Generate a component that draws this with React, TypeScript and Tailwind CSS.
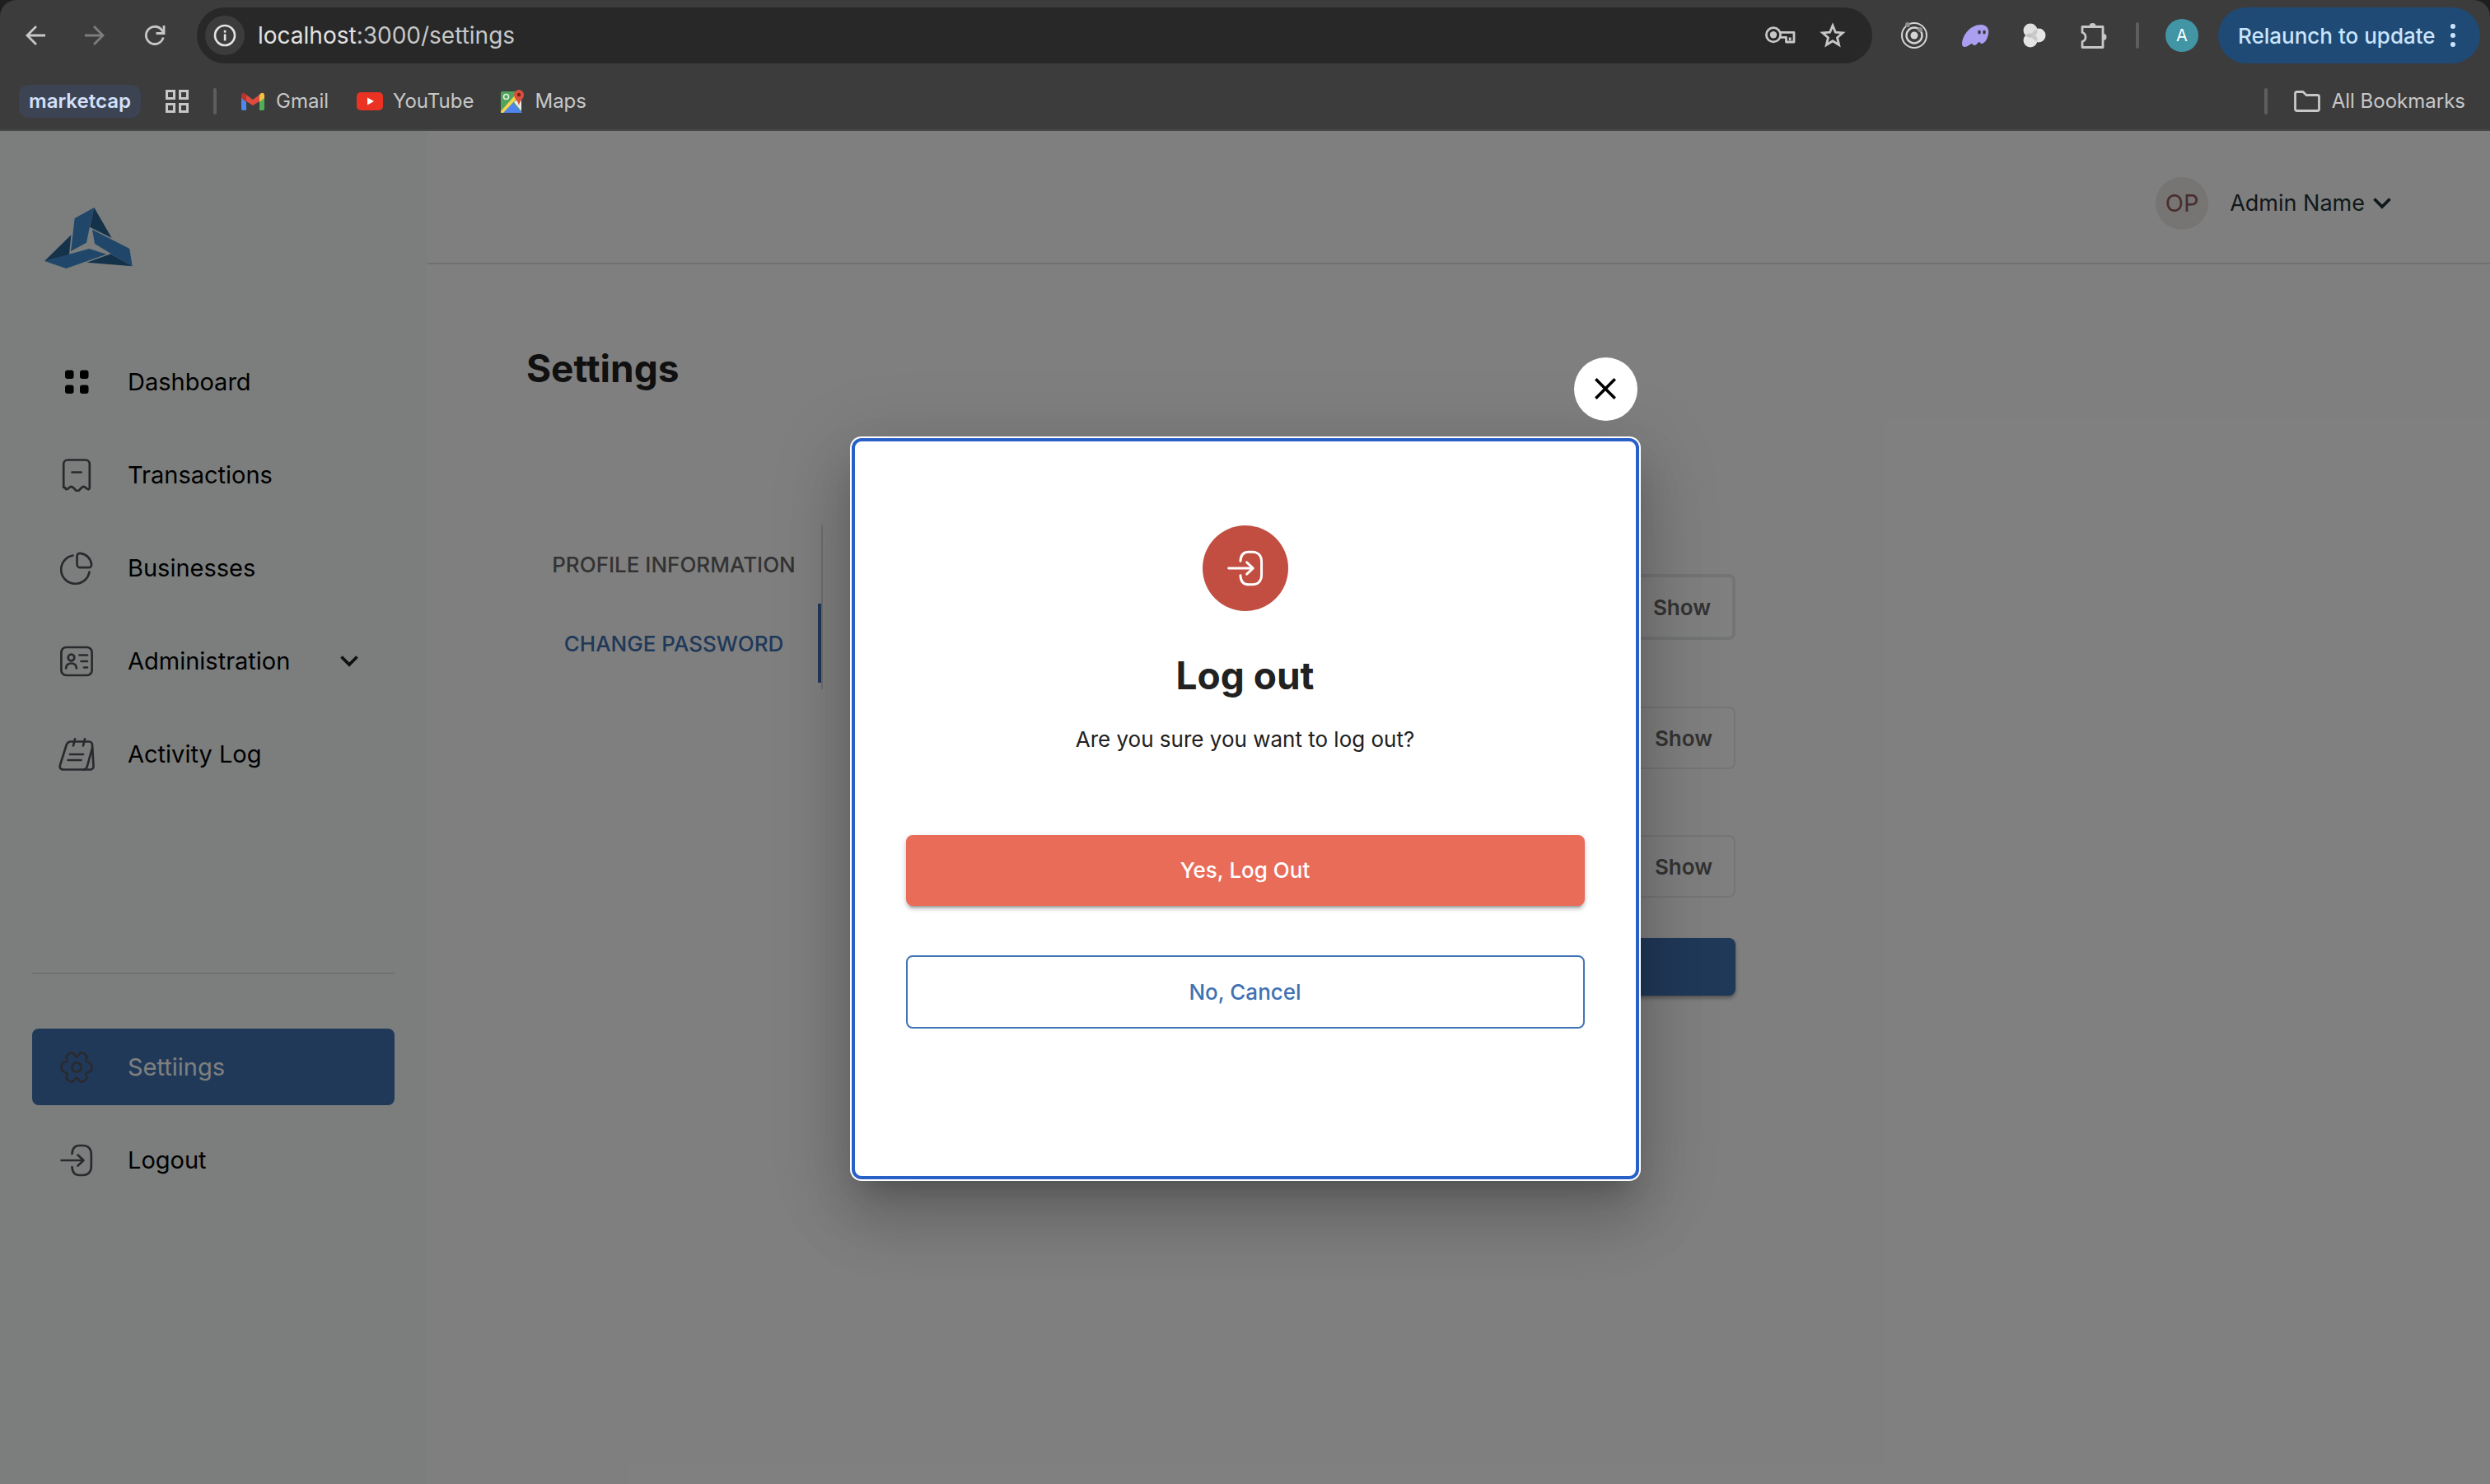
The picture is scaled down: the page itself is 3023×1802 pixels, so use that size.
import React from "react";

const stroke = {
  fill: "none",
  stroke: "currentColor",
  strokeLinecap: "round" as const,
  strokeLinejoin: "round" as const,
};

function BackIcon({ flip = false }: { flip?: boolean }) {
  return (
    <svg viewBox="0 0 24 24" className={flip ? "size-6 rotate-180" : "size-6"} {...stroke} strokeLinecap="butt" strokeLinejoin="miter" strokeWidth="2.8">
      <path d="M24 12H2M13 1 2 12l11 11" />
    </svg>
  );
}

function ReloadIcon() {
  return (
    <svg viewBox="0 0 26 26" className="size-[26px]" {...stroke} strokeLinecap="butt" strokeLinejoin="miter" strokeWidth="2.8">
      <path d="M23.2 15.5A10.6 10.6 0 1 1 21 6l2.5 3" />
      <path d="M24 1v9.5h-9.5" />
    </svg>
  );
}

function InfoIcon() {
  return (
    <svg viewBox="0 0 28 28" className="size-7">
      <circle cx="14" cy="14" r="12" fill="none" stroke="#e3e3e3" strokeWidth="2.6" />
      <rect x="12.8" y="12.4" width="2.6" height="8" fill="#e3e3e3" />
      <rect x="12.8" y="7.8" width="2.6" height="2.8" fill="#e3e3e3" />
    </svg>
  );
}

function KeyIcon() {
  return (
    <svg viewBox="0 0 38 24" className="h-6 w-[38px]" fill="none" stroke="#c7c7c7" strokeWidth="2.8" strokeLinejoin="round">
      <path d="M17.8 8.4H35V20H25.5v-5.700h-7.6" />
      <path d="M30.2 14.5V18" />
      <circle cx="10" cy="11.3" r="8.6" />
      <circle cx="10" cy="11.3" r="4.2" fill="#c7c7c7" stroke="none" />
    </svg>
  );
}

function StarIcon() {
  return (
    <svg viewBox="0 0 32 32" className="size-8">
      <path d="m16 4 3.4 8.2 8.8.7-6.700 5.800 2.100 8.700L16 22.700l-7.600 4.700 2.100-8.700-6.700-5.800 8.800-.7Z" fill="none" stroke="#c7c7c7" strokeWidth="2.8" />
    </svg>
  );
}

function TargetIcon() {
  return (
    <svg viewBox="0 0 34 34" className="size-[34px]" fill="none" stroke="#d5d5d5">
      <circle cx="17" cy="17" r="15" strokeWidth="2" />
      <circle cx="17" cy="17" r="9.5" strokeWidth="2.4" />
      <circle cx="17" cy="17" r="4.5" fill="#d5d5d5" stroke="none" />
      <circle cx="9" cy="4" r="3" fill="#8d8d8d" stroke="none" />
      <circle cx="24" cy="10" r="3" fill="#8d8d8d" stroke="none" />
    </svg>
  );
}

function GhostIcon() {
  return (
    <svg viewBox="0 0 34 28" className="h-7 w-[34px]">
      <path d="M1 24C2 12 12 1 24 1c7 0 10 5 9 11-1 7-5 12-8 12-2 0-2-2-3-2-2 0-3 4-6 4-2 0-2-2-3-2-2 0-5 4-9 4-2 0-3-2-3-4Z" fill="#ab9ff2" />
      <ellipse cx="22" cy="10" rx="1.8" ry="2.6" fill="#3c3c3c" />
      <ellipse cx="28" cy="10" rx="1.8" ry="2.6" fill="#3c3c3c" />
    </svg>
  );
}

function PetalIcon() {
  return (
    <svg viewBox="0 0 30 30" className="size-[30px]">
      <circle cx="20" cy="15" r="8.5" fill="#e6e6e6" />
      <circle cx="10" cy="9" r="8.5" fill="#e0e0e0" />
      <circle cx="10" cy="21" r="8.5" fill="#e4e4e4" />
      <path d="M4 15c3.500-3.500 8.500-3.500 12 0-3.500 3.500-8.500 3.500-12 0Z" fill="#c2c2c2" />
      <path d="M11.500 15c.2-3.500 3-6.500 6.800-7.400.8 3-.2 6-2.800 7.900Z" fill="#c9c9c9" />
      <path d="M11.500 15c.2 3.500 3 6.500 6.800 7.400.8-3-.2-6-2.800-7.900Z" fill="#c9c9c9" />
    </svg>
  );
}

function PuzzleIcon() {
  return (
    <svg viewBox="0 0 34 34" className="size-[34px]">
      <path d="M3 6.500h25v25H3v-7c2.500-.8 4-2.800 4-5.500s-1.500-4.700-4-5.500Z" fill="none" stroke="#c7c7c7" strokeWidth="2.8" strokeLinejoin="round" />
      <path d="M11.500 6a4 4 0 0 1 8 0ZM28.500 15a4 4 0 0 1 0 8Z" fill="#c7c7c7" />
    </svg>
  );
}

function AppsIcon() {
  return (
    <svg viewBox="0 0 28 28" className="size-7" fill="none" stroke="#c7c7c7" strokeWidth="3">
      <rect x="1.5" y="1.5" width="9" height="9" />
      <rect x="17.5" y="1.5" width="9" height="9" />
      <rect x="1.5" y="17.5" width="9" height="9" />
      <rect x="17.5" y="17.5" width="9" height="9" />
    </svg>
  );
}

function GmailIcon() {
  return (
    <svg viewBox="0 0 28 22" className="h-[22px] w-7">
      <path d="M0 5v15a2 2 0 0 0 2 2h4V9Z" fill="#4f87f0" />
      <path d="M28 5v15a2 2 0 0 1-2 2h-4V9Z" fill="#4fae57" />
      <path d="M6 3v8l8 5 8-5V3l-8 6Z" fill="#dd4b3e" />
      <path d="M0 4v3l6 5V3L4.500 1.500C2.500 0 0 1 0 4Z" fill="#b8352c" />
      <path d="M28 4v3l-6 5V3l1.500-1.500C25.500 0 28 1 28 4Z" fill="#f5c142" />
    </svg>
  );
}

function YouTubeIcon() {
  return (
    <svg viewBox="0 0 32 22" className="h-[22px] w-8">
      <rect width="32" height="22" rx="5" fill="#ea3323" />
      <path d="m13 6.500 8 4.500-8 4.500Z" fill="#fff" />
    </svg>
  );
}

function MapsIcon() {
  return (
    <svg viewBox="0 0 30 30" className="size-[30px]">
      <rect x="1" y="3" width="25" height="26" rx="2" fill="#4fa35b" />
      <path d="M3 29 15 16l12 13Z" fill="#4f84ec" />
      <path d="M1 27 18 8l3 3L4 29H1Z" fill="#f6d54a" />
      <path d="m17 16 9-8v19Z" fill="#e9e9e9" />
      <circle cx="7.5" cy="9.5" r="3" fill="none" stroke="#e4efe4" strokeWidth="1.6" />
      <path d="M23 1a6 6 0 0 1 6 6c0 5-4.500 6-6 13-1.500-7-6-8-6-13a6 6 0 0 1 6-6Z" fill="#d9503f" />
      <circle cx="23" cy="7" r="2.2" fill="#7a1f17" />
    </svg>
  );
}

function FolderIcon() {
  return (
    <svg viewBox="0 0 32 26" className="h-[26px] w-8" fill="none" stroke="#c7c7c7" strokeWidth="2.8" strokeLinejoin="round">
      <path d="M1.500 3.500a2 2 0 0 1 2-2H11l4 4h13.500a2 2 0 0 1 2 2v15a2 2 0 0 1-2 2h-25a2 2 0 0 1-2-2Z" />
    </svg>
  );
}

function Logo() {
  return (
    <svg viewBox="162 126 321 222" className="h-[74px] w-[107px]">
      <g fill="#408fd5">
        <path d="M343 126 272 165 258 285 315 254 327 195Z" />
        <path d="M162 321 325 276 388 296 241 348Z" />
        <path d="M336 206 472 276 482 340 404 294 345 258Z" />
      </g>
      <g fill="#2a6496">
        <path d="M343 126 407 237 327 197Z" />
        <path d="M259 226 162 321 252 297Z" />
        <path d="M404 295 482 340 316 326Z" />
      </g>
    </svg>
  );
}

function DashboardIcon() {
  return (
    <svg viewBox="0 0 40 40" className="size-10" fill="#000">
      <rect x="6" y="5.5" width="10.5" height="10.5" rx="3" />
      <rect x="24" y="5.5" width="10.5" height="10.5" rx="3" />
      <rect x="6" y="23.5" width="10.5" height="10.5" rx="3" />
      <rect x="24" y="23.5" width="10.5" height="10.5" rx="3" />
    </svg>
  );
}

function ReceiptIcon() {
  return (
    <svg viewBox="0 0 40 40" className="size-10" {...stroke} strokeWidth="2.7">
      <path d="M4.200 35V6.500A5 5 0 0 1 9.200 1.500h21.600a5 5 0 0 1 5 5V35c0 2-1.500 2.600-3 1.600l-2-1.600c-1.500-1.200-3.500-1.200-4.800.2l-3 3c-1.300 1.300-2.700 1.300-4 0l-3-3c-1.300-1.400-3.300-1.400-4.800-.2l-2 1.600c-1.500 1-3 .4-3-1.600Z" />
      <path d="M14.500 16.500h11" />
    </svg>
  );
}

function PieIcon() {
  return (
    <svg viewBox="0 0 40 40" className="size-10" {...stroke} strokeWidth="2.7">
      <path d="M15.500 4.500A17.300 17.300 0 1 0 35.500 24.500" />
      <path d="M20.500 5.500c0-2.500 1.500-3.800 4-3.600C31.500 2.500 37 8 38 15c.3 2.800-1 4.200-3.500 4.200H24.500a4 4 0 0 1-4-4Z" />
    </svg>
  );
}

function IdCardIcon() {
  return (
    <svg viewBox="0 0 40 40" className="size-10" {...stroke} strokeWidth="2.7">
      <rect x="1.4" y="3" width="37.2" height="34" rx="6" />
      <circle cx="13.5" cy="15.5" r="3.8" />
      <path d="M7 28.500c.4-4 3-6 6.500-6s6.100 2 6.500 6M23.500 12.500H33M25.500 20H33M29 27.500h4" />
    </svg>
  );
}

function NotepadIcon() {
  return (
    <svg viewBox="0 0 44 40" className="h-10 w-11" {...stroke} strokeWidth="2.7">
      <path d="M15 4.500h22a4 4 0 0 1 4 4l1.500 26a4 4 0 0 1-4 4H6c-3.500 0-5-2.500-4-5.500L9.500 9c1-3 2.500-4.500 5.500-4.500Z" />
      <path d="M41 12 35 34c-.8 3-2 4.500-5 4.500M20 1.400l-2 8.100M32 1.400l-2 8.100M14 20h16M11.500 27h16" />
    </svg>
  );
}

function GearIcon() {
  return (
    <svg viewBox="0 -1 40 40" className="size-10" {...stroke} strokeWidth="2.7">
      <circle cx="20" cy="19" r="5.6" />
      <path d="M20 6.500C18 6.500 17.500 1.400 14.500 1.400C12 1.400 7.500 3.500 7.500 6.500C7.500 8.500 9.500 9.500 8.500 11.500C7.500 13.500 1.400 12 1.400 19C1.400 26 7.500 24.500 8.500 26.500C9.500 28.500 7.500 29.500 7.500 31.500C7.500 34.500 12 36.600 14.500 36.600C17.500 36.600 18 31.500 20 31.500C22 31.500 22.500 36.600 25.500 36.600C28 36.600 32.500 34.500 32.500 31.500C32.500 29.500 30.500 28.500 31.500 26.500C32.500 24.500 38.600 26 38.600 19C38.600 12 32.500 13.500 31.500 11.500C30.500 9.500 32.500 8.500 32.500 6.500C32.500 3.500 28 1.400 25.500 1.400C22.500 1.400 22 6.500 20 6.500Z" />
    </svg>
  );
}

function LogoutIcon({ className }: { className: string }) {
  return (
    <svg viewBox="0 0 40 40" className={className} {...stroke} strokeWidth="2.7">
      <path d="M14.500 12c.4-7 3.500-10 9-10h4C34 2 37.800 6 37.800 13v14c0 7-3.800 11-10.300 11h-4c-5.500 0-8.600-3-9-10" />
      <path d="M1.500 20H28M21.500 13.500 28.500 20l-7 6.500" />
    </svg>
  );
}

function ChevronIcon() {
  return (
    <svg viewBox="0 0 22 14" className="h-3.5 w-[22px]" {...stroke} strokeLinecap="butt" strokeLinejoin="miter" strokeWidth="3.8">
      <path d="m1.500 1.500 9.500 9.500 9.500-9.500" />
    </svg>
  );
}

function NavItem({ icon, label, active = false, children }: { icon: React.ReactNode; label: string; active?: boolean; children?: React.ReactNode }) {
  return (
    <a
      href="#"
      className={
        active
          ? "flex h-[93px] items-center gap-10 rounded-lg bg-[#4072b2] pl-8 text-[29px] text-white"
          : "flex h-[93px] items-center gap-10 rounded-lg pl-8 text-[29px] text-black"
      }
    >
      <span className="flex w-11 justify-center text-[#53545c]">{icon}</span>
      <span>{label}</span>
      {children}
    </a>
  );
}

function PasswordField({ label, focused = false }: { label: string; focused?: boolean }) {
  return (
    <div
      className={
        focused
          ? "flex h-20 items-center rounded-lg border-4 border-[#e6e9ec] pr-[26px]"
          : "flex h-[76px] items-center rounded-lg border-2 border-[#ebebeb] pr-[26px]"
      }
    >
      <input type="password" aria-label={label} className="h-full min-w-0 flex-1 px-6 text-[26px] outline-none" />
      <button type="button" className="text-[26px] font-semibold text-[#666]">Show</button>
    </div>
  );
}

function BrowserChrome() {
  return (
    <header className="bg-[#1f1f1f] text-[#c7c7c7]">
      <div className="rounded-t-[20px] border-b-2 border-[#474747] bg-[#3c3c3c]">
        <div className="flex h-[86px] items-center pr-3 pl-[31px]">
          <div className="flex w-[208px] items-center gap-12">
            <button type="button" aria-label="Back"><BackIcon /></button>
            <button type="button" aria-label="Forward" className="text-[#7d7d7d]"><BackIcon flip /></button>
            <button type="button" aria-label="Reload"><ReloadIcon /></button>
          </div>
          <div className="flex h-[68px] flex-1 items-center rounded-full bg-[#282828] pr-8 pl-2.5">
            <button type="button" aria-label="View site information" className="flex size-12 items-center justify-center rounded-full bg-[#3c3c3c]">
              <InfoIcon />
            </button>
            <div className="ml-4 flex-1 text-[28px] whitespace-nowrap">
              <span className="text-[#e3e3e3]">localhost</span>:3000/settings
            </div>
            <button type="button" aria-label="Passwords" className="mr-7"><KeyIcon /></button>
            <button type="button" aria-label="Bookmark this page"><StarIcon /></button>
          </div>
          <div className="ml-[34px] flex items-center gap-10">
            <TargetIcon />
            <GhostIcon />
            <PetalIcon />
            <PuzzleIcon />
          </div>
          <span className="ml-[34px] h-8 w-1 rounded-full bg-[#5e5e5e]" />
          <button type="button" aria-label="Profile" className="ml-8 size-10 rounded-full bg-[#4295a5] text-[20px] text-white">A</button>
          <button type="button" className="ml-6 flex h-[68px] w-[318px] items-center justify-between rounded-full bg-[#1f4a75] pr-[30px] pl-6 text-[26px] font-medium whitespace-nowrap text-[#c9e4fb]">
            Relaunch to update
            <svg viewBox="0 0 6 28" className="h-7 w-1.5 shrink-0" fill="#c9e4fb">
              <circle cx="3" cy="3" r="3" />
              <circle cx="3" cy="14" r="3" />
              <circle cx="3" cy="25" r="3" />
            </svg>
          </button>
        </div>
        <nav aria-label="Bookmarks" className="flex h-[71px] items-center pt-0.5 pr-[30px] pl-[23px] text-[24px]">
          <a href="#" className="flex h-10 w-[148px] items-center justify-center rounded-xl bg-[#3c4353] font-semibold text-[#d3e0fb]">marketcap</a>
          <button type="button" aria-label="Apps" className="ml-[30px]"><AppsIcon /></button>
          <span className="ml-[30px] h-8 w-1 rounded-full bg-[#5e5e5e]" />
          <a href="#" className="ml-[30px] flex items-center gap-3.5"><GmailIcon />Gmail</a>
          <a href="#" className="ml-[34px] flex items-center gap-3"><YouTubeIcon />YouTube</a>
          <a href="#" className="ml-8 flex items-center gap-3"><MapsIcon />Maps</a>
          <span className="ml-auto h-8 w-1 rounded-full bg-[#5e5e5e]" />
          <a href="#" className="ml-8 flex items-center gap-3.5"><FolderIcon />All Bookmarks</a>
        </nav>
      </div>
    </header>
  );
}

function Sidebar() {
  return (
    <aside className="flex w-[519px] shrink-0 flex-col bg-[#f8fcfa] pr-10 pl-[39px]">
      <div className="flex h-[258px] items-start pt-[93px] pl-[15px]"><Logo /></div>
      <nav className="flex flex-col gap-5">
        <NavItem icon={<DashboardIcon />} label="Dashboard" />
        <NavItem icon={<ReceiptIcon />} label="Transactions" />
        <NavItem icon={<PieIcon />} label="Businesses" />
        <NavItem icon={<IdCardIcon />} label="Administration">
          <span className="ml-auto pr-11 text-[#212121]"><ChevronIcon /></span>
        </NavItem>
        <NavItem icon={<NotepadIcon />} label="Activity Log" />
      </nav>
      <nav className="mt-[219px] flex flex-col gap-5 border-t-2 border-[#e0e1e0] pt-[66px]">
        <NavItem icon={<GearIcon />} label="Settiings" active />
        <NavItem icon={<LogoutIcon className="size-10" />} label="Logout" />
      </nav>
    </aside>
  );
}

function SettingsPage() {
  return (
    <div className="flex min-w-0 flex-1 flex-col bg-white">
      <div className="flex h-[162px] items-center justify-end border-b-2 border-[#e0e0e0] pt-4 pr-[120px]">
        <span className="flex size-16 items-center justify-center rounded-full bg-[#efebe7] text-[29px] text-[#8e5a5c]">OP</span>
        <button type="button" className="ml-[26px] flex items-center gap-2.5 text-[27px] text-[#1f3236]">
          Admin Name
          <ChevronIcon />
        </button>
      </div>
      <main className="px-[120px]">
        <h1 className="mt-[98px] text-[46px] leading-[56px] font-bold text-[#212121]">Settings</h1>
        <div className="mt-[162px] flex items-start">
          <div role="tablist" aria-orientation="vertical" className="flex h-[200px] w-[360px] flex-col border-r-2 border-[#dcdcdc] text-[26px] font-medium">
            <button type="button" role="tab" aria-selected="false" className="h-24 text-[#666]">PROFILE INFORMATION</button>
            <button type="button" role="tab" aria-selected="true" className="h-24 text-[#4072b2] shadow-[inset_-4px_0_0_#4072b2]">CHANGE PASSWORD</button>
          </div>
          <form className="mt-[60px] ml-12 flex w-[1060px] flex-col">
            <PasswordField label="Current password" focused />
            <div className="mt-[81px]"><PasswordField label="New password" /></div>
            <div className="mt-20"><PasswordField label="Confirm password" /></div>
            <button type="submit" aria-label="Save password" className="mt-[49px] h-[70px] rounded-lg bg-[#4072b2] shadow-[0_3px_5px_rgba(0,0,0,0.35)]" />
          </form>
        </div>
      </main>
    </div>
  );
}

function LogoutDialog() {
  return (
    <div className="absolute inset-0 flex items-center justify-center bg-black/50 pt-0.5">
      <section
        role="dialog"
        aria-modal="true"
        aria-labelledby="logout-title"
        className="relative flex h-[900px] w-[956px] flex-col items-center rounded-xl border-4 border-[#2860c8] bg-white px-[62px] pt-[102px] shadow-[0_0_0_2px_#fff,0_22px_30px_-14px_rgba(0,0,0,0.2),0_48px_76px_6px_rgba(0,0,0,0.14),0_18px_92px_16px_rgba(0,0,0,0.12)]"
      >
        <button type="button" aria-label="Close" className="absolute -top-[102px] -right-0.5 flex size-[77px] items-center justify-center rounded-full bg-white">
          <svg viewBox="0 0 26 26" className="size-[26px]" stroke="#000" strokeWidth="3.6">
            <path d="m1.300 1.300 23.400 23.400M24.700 1.300 1.300 24.700" />
          </svg>
        </button>
        <span className="flex size-[104px] items-center justify-center rounded-full bg-[#c14e41] text-white">
          <LogoutIcon className="size-11" />
        </span>
        <h2 id="logout-title" className="mt-[50px] text-[46px] leading-[56px] font-bold text-[#212121]">Log out</h2>
        <p className="mt-[30px] text-[26px] leading-10 text-[#212121]">Are you sure you want to log out?</p>
        <button type="button" className="mt-24 h-[86px] w-full rounded-lg bg-[#e96c59] text-[26px] font-medium text-white shadow-[0_6px_2px_-4px_rgba(0,0,0,0.2),0_4px_4px_rgba(0,0,0,0.14),0_2px_10px_rgba(0,0,0,0.12)]">
          Yes, Log Out
        </button>
        <button type="button" className="mt-[60px] h-[89px] w-full rounded-lg border-2 border-[#4175b5] text-[26px] font-medium text-[#4072b2]">
          No, Cancel
        </button>
      </section>
    </div>
  );
}

export default function App() {
  return (
    <div className="flex min-h-screen flex-col font-['Inter',sans-serif]">
      <BrowserChrome />
      <div className="relative flex flex-1">
        <Sidebar />
        <SettingsPage />
        <LogoutDialog />
      </div>
    </div>
  );
}
